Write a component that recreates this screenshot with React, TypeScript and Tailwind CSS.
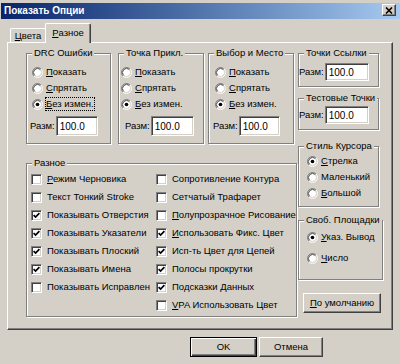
import React from "react";
import clsx from "clsx";

// ─── Helpers ──────────────────────────────────────────────────────────────────

// "&" marks the accelerator letter, which is drawn underlined
function Label({ text }: { text: string }) {
  const i = text.indexOf("&");
  if (i < 0) return <>{text}</>;
  return (
    <>
      {text.slice(0, i)}
      <span className="underline underline-offset-[1px]">{text[i + 1]}</span>
      {text.slice(i + 2)}
    </>
  );
}

const raised =
  "border border-t-white border-l-white border-r-[#404040] border-b-[#404040] shadow-[inset_-1px_-1px_0_#808080]";
const sunken =
  "border border-t-[#808080] border-l-[#808080] border-r-white border-b-white shadow-[inset_1px_1px_0_#404040,inset_-1px_-1px_0_#D4D0C8]";

// ─── Group Box ────────────────────────────────────────────────────────────────

interface GroupBoxProps {
  title: string;
  className?: string;
  children: React.ReactNode;
}

function GroupBox({ title, className, children }: GroupBoxProps) {
  return (
    <fieldset
      className={clsx(
        "border border-[#808080] shadow-[inset_1px_1px_0_#fff,1px_1px_0_#fff]",
        className
      )}
    >
      <legend className="ml-[5px] px-[2px] leading-[12px] bg-[#D4D0C8] whitespace-nowrap">
        {title}
      </legend>
      {children}
    </fieldset>
  );
}

// ─── Controls ─────────────────────────────────────────────────────────────────

function RadioMark({ checked }: { checked?: boolean }) {
  return (
    <svg width="11" height="11" viewBox="0 0 12 12" className="shrink-0">
      <circle cx="6" cy="6" r="4.5" fill="#fff" />
      <path d="M2.11 9.89A5.5 5.5 0 0 1 9.89 2.11" stroke="#808080" fill="none" />
      <path d="M9.89 2.11A5.5 5.5 0 0 1 2.11 9.89" stroke="#fff" fill="none" />
      <path d="M2.82 9.18A4.5 4.5 0 0 1 9.18 2.82" stroke="#404040" fill="none" />
      <path d="M9.18 2.82A4.5 4.5 0 0 1 2.82 9.18" stroke="#D4D0C8" fill="none" />
      {checked && <circle cx="6" cy="6" r="2" fill="#000" />}
    </svg>
  );
}

function Radio({
  label,
  checked,
  focus,
  className,
}: {
  label: string;
  checked?: boolean;
  focus?: boolean;
  className?: string;
}) {
  return (
    <div className={clsx("flex items-center gap-[3px] h-[16px] whitespace-nowrap", className)}>
      <RadioMark checked={checked} />
      <span className={clsx("leading-[12px]", focus && "outline outline-1 outline-dotted outline-black")}>
        <Label text={label} />
      </span>
    </div>
  );
}

function Check({ label, checked }: { label: string; checked?: boolean }) {
  return (
    <div className="flex items-center gap-[5px] h-[18px] whitespace-nowrap">
      <span className={clsx("w-[11px] h-[11px] shrink-0 bg-white flex items-center justify-center", sunken)}>
        {checked && (
          <svg width="7" height="7" viewBox="0 0 7 7">
            <path d="M0.6 3.1 L2.6 5.1 L6.4 1.2" stroke="#000" strokeWidth="1.7" fill="none" />
          </svg>
        )}
      </span>
      <span>
        <Label text={label} />
      </span>
    </div>
  );
}

function SizeRow({ className, editClass }: { className?: string; editClass: string }) {
  return (
    <div className={clsx("flex items-center", className)}>
      <span>Разм:</span>
      <div className={clsx("ml-px bg-white flex items-center pl-[3px] text-[10px]", sunken, editClass)}>
        100.0
      </div>
    </div>
  );
}

function Button({
  label,
  className,
  isDefault,
}: {
  label: string;
  className?: string;
  isDefault?: boolean;
}) {
  return (
    <div
      className={clsx(
        "h-[20px] bg-[#D4D0C8] flex items-center justify-center whitespace-nowrap",
        isDefault
          ? "border border-black shadow-[inset_1px_1px_0_#fff,inset_-1px_-1px_0_#404040,inset_-2px_-2px_0_#808080]"
          : raised,
        className
      )}
    >
      <Label text={label} />
    </div>
  );
}

// ─── Data ─────────────────────────────────────────────────────────────────────

const leftChecks = [
  { label: "&Режим Черновика", checked: false },
  { label: "Текст Тонкий Stroke", checked: false },
  { label: "Показывать Отверстия", checked: true },
  { label: "Показывать Указатели", checked: true },
  { label: "Показывать Плоский", checked: true },
  { label: "Показывать Имена", checked: true },
  { label: "Показывать Исправлен", checked: false },
];

const rightChecks = [
  { label: "Сопротивление Контура", checked: false },
  { label: "Сетчатый Трафарет", checked: false },
  { label: "&Полупрозрачное Рисование", checked: false },
  { label: "&Использовать Фикс. Цвет", checked: true },
  { label: "Исп-ть Цвет для Цепей", checked: true },
  { label: "Полосы прокрутки", checked: true },
  { label: "Подсказки Данных", checked: true },
  { label: "&VPA Использовать Цвет", checked: false },
];

// ─── Dialog ───────────────────────────────────────────────────────────────────

export default function App() {
  return (
    <div className="w-[400px] h-[364px] overflow-hidden bg-[#D4D0C8] text-black text-[9.5px] font-['Liberation_Sans',Arial,sans-serif] flex flex-col">
      {/* title bar */}
      <div className="ml-px mt-[3px] h-[16px] flex justify-between bg-linear-to-r from-[#0A246A] to-[#A6CAF0] pl-[3px] pr-[4px]">
        <span className="text-white font-bold text-[10px] leading-[16px]">Показать Опции</span>
        <div className={clsx("mt-px w-[14px] h-[12px] bg-[#D4D0C8] flex items-center justify-center", raised)}>
          <svg width="8" height="7" viewBox="0 0 8 7">
            <path d="M1 0.5 L7 6.5 M7 0.5 L1 6.5" stroke="#000" strokeWidth="1.6" />
          </svg>
        </div>
      </div>

      {/* tabs */}
      <div className="mt-[4px] ml-[10px] h-[19px] flex items-end">
        <div className="w-[35px] h-[14px] border-t border-l border-white rounded-tl-[2px] flex items-center justify-center leading-[12px]">
          <Label text="&Цвета" />
        </div>
        <div className="relative z-10 -mb-px w-[46px] h-[20px] bg-[#D4D0C8] border-t border-l border-r border-t-white border-l-white border-r-[#404040] shadow-[inset_-1px_0_0_#808080] rounded-t-[2px] flex justify-center pt-[2px] leading-[13px]">
          <Label text="&Разное" />
        </div>
      </div>

      {/* tab panel */}
      <div className={clsx("ml-[7px] w-[386px] h-[288px] flex pl-[18px] pt-[4px]", raised)}>
        <div className="w-[268px] flex flex-col">
          <div className="flex">
            <GroupBox title="DRC Ошибки" className="w-[85px] pt-[5px] pb-[7px]">
              <div className="pl-[5px]">
                <Radio label="&Показать" />
                <Radio label="&Спрятать" />
                <Radio label="&Без измен." checked focus />
              </div>
              <SizeRow className="mt-[4px] pl-[3px]" editClass="w-[42px] h-[20px]" />
            </GroupBox>
            <GroupBox title="Точка Прикл." className="ml-[7px] w-[86px] pt-[5px] pb-[7px]">
              <div className="pl-[2px]">
                <Radio label="&Показать" />
                <Radio label="&Спрятать" />
                <Radio label="&Без измен." checked />
              </div>
              <SizeRow className="mt-[4px] pl-[6px]" editClass="w-[43px] h-[20px]" />
            </GroupBox>
            <GroupBox title="Выбор и Место" className="ml-[4px] w-[86px] pt-[5px] pb-[7px]">
              <div className="pl-[6px]">
                <Radio label="&Показать" />
                <Radio label="&Спрятать" />
                <Radio label="&Без измен." checked />
              </div>
              <SizeRow className="mt-[4px] pl-[4px]" editClass="w-[41px] h-[20px]" />
            </GroupBox>
          </div>

          <GroupBox title="Разное" className="mt-[13px] pt-px pb-[2px]">
            <div className="flex pl-[4px]">
              <div className="w-[125px] flex flex-col">
                {leftChecks.map((c) => (
                  <Check key={c.label} label={c.label} checked={c.checked} />
                ))}
              </div>
              <div className="flex flex-col">
                {rightChecks.map((c) => (
                  <Check key={c.label} label={c.label} checked={c.checked} />
                ))}
              </div>
            </div>
          </GroupBox>
        </div>

        <div className="ml-[4px] w-[81px] flex flex-col">
          <GroupBox title="Точки Ссылки" className="pt-[4px] pb-[5px]">
            <SizeRow editClass="w-[44px] h-[18px]" />
          </GroupBox>
          <GroupBox title="Тестовые Точки" className="mt-[5px] pt-[2px] pb-[5px]">
            <SizeRow editClass="w-[44px] h-[18px]" />
          </GroupBox>
          <GroupBox title="Стиль Курсора" className="mt-[10px] pt-[1px] pb-[5px]">
            <div className="pl-[8px]">
              <Radio label="&Стрелка" checked />
              <Radio label="Маленький" />
              <Radio label="&Большой" />
            </div>
          </GroupBox>
          <GroupBox title="Своб. Площадки" className="mt-[7px] pt-[3px] pb-[13px]">
            <div className="pl-[8px] flex flex-col gap-[5px]">
              <Radio label="&Указ. Вывод" checked />
              <Radio label="&Число" />
            </div>
          </GroupBox>
          <Button label="&По умолчанию" className="mt-[13px] ml-[5px] w-[78px]" />
        </div>
      </div>

      {/* dialog buttons */}
      <div className="mt-[7px] ml-[190px] flex gap-[2px]">
        <Button label="OK" isDefault className="w-[67px]" />
        <Button label="Отмена" className="w-[64px]" />
      </div>
    </div>
  );
}
